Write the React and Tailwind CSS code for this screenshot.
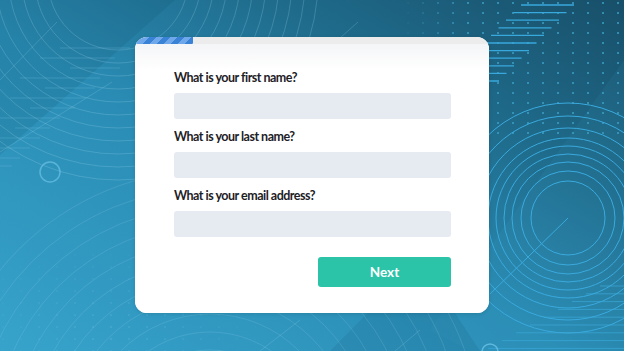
import React from "react";

function Background() {
  const arcsTL = [];
  for (let r = 70; r <= 200; r += 13) arcsTL.push(r);
  const arcsBL = [];
  for (let r = 90; r <= 280; r += 18) arcsBL.push(r);
  const ringsR = [37, 47, 56, 64, 72, 80, 90, 102, 115];
  const tr = [];
  for (let i = 0; i < 11; i++) {
    const y = 5 + i * 7.6;
    const x1 = 521 - i * 7.5;
    tr.push([x1, y, x1 + 53]);
  }
  const leftLines = [
    [60, 48, 130], [40, 58, 115], [70, 68, 120], [20, 78, 100], [45, 88, 95],
    [10, 98, 85], [30, 108, 75], [0, 118, 60], [15, 128, 50], [0, 138, 40],
    [0, 148, 30], [0, 158, 20], [0, 166, 12],
  ];
  const brLines = [];
  for (let i = 0; i < 9; i++) {
    const y = 286 + i * 7.8;
    const x1 = 600 - i * 14;
    brLines.push([x1, y, 624]);
  }
  return (
    <svg className="absolute inset-0" width="624" height="351" viewBox="0 0 624 351">
      <defs>
        <linearGradient id="bg" x1="0" y1="1" x2="1" y2="0">
          <stop offset="0" stopColor="#37a3cb" />
          <stop offset="0.45" stopColor="#2a8cb4" />
          <stop offset="0.72" stopColor="#1f6b8b" />
          <stop offset="1" stopColor="#184f69" />
        </linearGradient>
        <pattern id="dots" width="15" height="10" patternUnits="userSpaceOnUse">
          <circle cx="3" cy="3" r="1" fill="#3aa0c8" />
        </pattern>
        <pattern id="dots2" width="18" height="12" patternUnits="userSpaceOnUse">
          <circle cx="3" cy="3" r="1" fill="#6cc0e0" />
        </pattern>
        <linearGradient id="fadeL" x1="0" y1="0" x2="1" y2="0">
          <stop offset="0" stopColor="#fff" stopOpacity="0" />
          <stop offset="0.3" stopColor="#fff" stopOpacity="1" />
          <stop offset="1" stopColor="#fff" stopOpacity="1" />
        </linearGradient>
        <mask id="m1">
          <rect x="400" y="0" width="224" height="135" fill="url(#fadeL)" />
        </mask>
        <radialGradient id="fadeR" cx="0.4" cy="0.9" r="0.7">
          <stop offset="0" stopColor="#fff" stopOpacity="1" />
          <stop offset="1" stopColor="#fff" stopOpacity="0" />
        </radialGradient>
        <mask id="m2">
          <rect x="0" y="200" width="260" height="151" fill="url(#fadeR)" />
        </mask>
      </defs>
      <rect width="624" height="351" fill="url(#bg)" />
      <polygon points="0,0 175,0 0,155" fill="#0b3f5a" opacity="0.12" />
      <polygon points="624,60 624,351 470,351 430,330" fill="#4fb0d6" opacity="0.08" />
      <polygon points="330,351 420,260 480,351" fill="#0b3f5a" opacity="0.1" />
      <rect x="400" y="0" width="224" height="135" fill="url(#dots)" mask="url(#m1)" />
      <rect x="0" y="200" width="260" height="151" fill="url(#dots2)" opacity="0.35" mask="url(#m2)" />
      <g fill="none" stroke="#9fd6ee" strokeWidth="0.8" opacity="0.3">
        {arcsTL.map((r) => (
          <circle key={r} cx="118" cy="-20" r={r} />
        ))}
      </g>
      <g fill="none" stroke="#9fd6ee" strokeWidth="0.8" opacity="0.22">
        {arcsBL.map((r) => (
          <circle key={r} cx="210" cy="440" r={r} />
        ))}
      </g>
      <g stroke="#8ccfe9" strokeWidth="0.8" opacity="0.3">
        <line x1="57" y1="22" x2="0" y2="80" />
        <line x1="112" y1="82" x2="0" y2="152" />
        <line x1="358" y1="22" x2="340" y2="38" />
        <line x1="300" y1="320" x2="260" y2="351" />
        <line x1="420" y1="330" x2="395" y2="351" />
      </g>
      <g stroke="#7cc3e2" strokeWidth="0.8" opacity="0.35">
        {leftLines.map(([a, y, b], i) => (
          <line key={i} x1={a} y1={y} x2={b} y2={y} />
        ))}
      </g>
      <g stroke="#38a9dc" strokeWidth="1.3">
        {tr.map(([a, y, b], i) => (
          <line key={i} x1={a} y1={y} x2={b} y2={y} />
        ))}
      </g>
      <g fill="none" stroke="#3aaade" strokeWidth="1">
        {ringsR.map((r) => (
          <circle key={r} cx="568" cy="218" r={r} />
        ))}
        <line x1="568" y1="218" x2="490" y2="294" />
      </g>
      <g stroke="#3aa8d8" strokeWidth="1" opacity="0.7">
        {brLines.map(([a, y, b], i) => (
          <line key={i} x1={a} y1={y} x2={b} y2={y} />
        ))}
      </g>
      <circle cx="50" cy="172" r="10" fill="none" stroke="#6cc2e6" strokeWidth="1.5" opacity="0.7" />
      <circle cx="490" cy="352" r="8" fill="none" stroke="#6cc2e6" strokeWidth="1.5" opacity="0.8" />
    </svg>
  );
}

function Field({ label, first }) {
  return (
    <div className={first ? "flex flex-col" : "mt-[9px] flex flex-col"}>
      <label className="h-4 pt-px text-[12.5px] leading-4 font-bold text-[#1d2126] tracking-[-0.5px]">{label}</label>
      <div className="mt-2 h-[26px] rounded-[3px] bg-[#e6eaf1]" />
    </div>
  );
}

export default function App() {
  return (
    <div className="relative w-[624px] h-[351px] overflow-hidden font-['Lato',sans-serif]">
      <Background />
      <div className="relative flex justify-center pt-[37px]">
        <div className="w-[354px] h-[276px] rounded-[12px] bg-white overflow-hidden shadow-[0_1px_4px_rgba(0,0,0,0.12)] flex flex-col">
          <div className="h-[7px] bg-[#ececec] flex">
            <div className="w-[58px] h-full bg-[repeating-linear-gradient(135deg,#3a82d6_0px,#3a82d6_5px,#6fa8ea_5px,#6fa8ea_10px)]" />
          </div>
          <div className="flex-1 flex flex-col bg-[linear-gradient(to_bottom,#f4f5f7_0px,#ffffff_26px)] pl-[39px] pr-[38px] pt-[25px]">
            <Field label="What is your first name?" first />
            <Field label="What is your last name?" />
            <Field label="What is your email address?" />
            <div className="mt-[20px] flex justify-end">
              <button className="w-[133px] h-[30px] rounded-[3px] bg-[#2bc4a9] text-white text-[13.5px] font-bold">
                Next
              </button>
            </div>
          </div>
        </div>
      </div>
    </div>
  );
}
